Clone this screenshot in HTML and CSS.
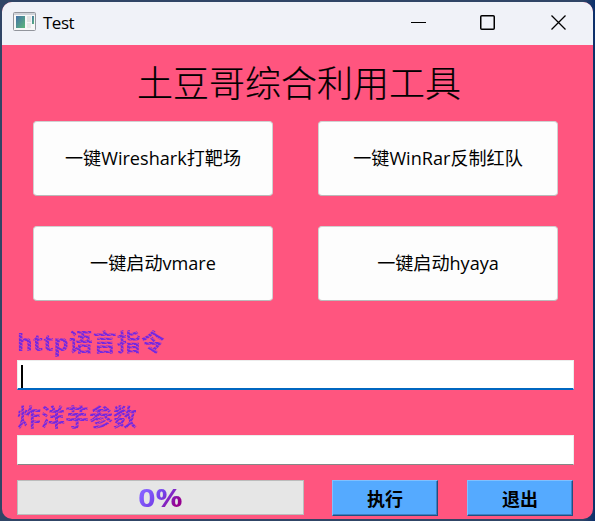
FILE: index.html
```html
<!DOCTYPE html>
<html lang="zh">
<head>
<meta charset="utf-8">
<title>Test</title>
<link rel="stylesheet" href="styles.css">
</head>
<body>
<div class="window">
  <header class="titlebar">
    <svg class="app-icon" width="24" height="20" viewBox="0 0 24 20">
      <defs><linearGradient id="g" x1="0" y1="0" x2="1" y2="1"><stop offset="0" stop-color="#4470a8"/><stop offset="1" stop-color="#5cb878"/></linearGradient></defs>
      <rect x=".5" y=".5" width="22" height="18" rx="1" fill="#f7f7f7" stroke="#92959c"/>
      <path d="M1 2h21" stroke="#c3c7cf" stroke-width="1.5"/>
      <rect x="3" y="4" width="9" height="12" fill="url(#g)"/>
      <rect x="14" y="4" width="4" height="6" fill="#e2e2e2"/><rect x="14" y="11" width="4" height="5" fill="#e8e8e8"/>
      <rect x="19" y="4" width="2" height="8" fill="url(#g)"/>
    </svg>
    <span class="caption">Test</span>
    <div class="controls">
      <svg width="15" height="15" viewBox="0 0 15 15"><path d="M0 7.5h15"/></svg>
      <svg class="maximize" width="15" height="15" viewBox="0 0 15 15"><rect x=".75" y=".75" width="13.5" height="13.5" rx="1"/></svg>
      <svg class="close" width="15" height="15" viewBox="0 0 15 15"><path d="M.5.5l14 14M14.500.5l-14 14"/></svg>
    </div>
  </header>
  <main class="content">
    <h1 class="heading">土豆哥综合利用工具</h1>
    <div class="tools">
      <button class="tool">一键Wireshark打靶场</button>
      <button class="tool">一键WinRar反制红队</button>
      <button class="tool">一键启动vmare</button>
      <button class="tool">一键启动hyaya</button>
    </div>
    <div class="field"><span class="label label-http">http语言指令</span><div class="input focused"><i class="caret"></i></div></div>
    <div class="field"><span class="label label-param">炸洋芋参数</span><div class="input"></div></div>
    <div class="actions">
      <div class="progress"><span class="percent">0%</span></div>
      <button class="action">执行</button>
      <button class="action">退出</button>
    </div>
  </main>
</div>
</body>
</html>
```
FILE: styles.css
```css
* { box-sizing: border-box; }
body {
  margin: 0; height: 521px; padding: 2px; overflow: hidden;
  background: linear-gradient(90deg, #304566 0, #304566 582px, #0b2f6b 595px);
  font-family: "Open Sans", "Noto Sans CJK SC", sans-serif;
  color: #000;
}
.window { width: 591px; height: 517px; border-radius: 10px; overflow: hidden; background: #ff557f; }
.titlebar { height: 43px; display: flex; align-items: center; padding: 0 27px 0 11px; background: #f0f2f8; }
.app-icon { margin-top: -3px; }
.caption { margin-left: 6px; font-size: 17px; letter-spacing: -.5px; line-height: 20px; margin-top: -2px; }
.controls { display: flex; gap: 54px; margin-left: auto; margin-top: -2px; }
.controls svg { fill: none; stroke: #000; stroke-width: 1; }
.controls .maximize { stroke-width: 1.5; }
.controls .close { stroke-width: 1.3; margin-left: 2px; }
.content { padding: 17px 19px 0 15px; }
.heading { margin: 0; height: 44px; line-height: 44px; text-align: center; font-size: 36px; font-weight: 300; padding-left: 7px; -webkit-text-stroke: .2px #000; }
.tools { display: grid; grid-template-columns: 240px 240px; gap: 30px 45px; margin: 15px 0 0 16px; }
.tool {
  height: 75px; padding: 0 0 4px; border: 1px solid #d0d0d0; border-bottom-color: #b9b9b9; border-radius: 4px;
  background: #fdfdfd; font: inherit; font-size: 18.1px; color: #000;
}
.field { height: 75px; display: flex; flex-direction: column; }
.tools + .field { margin-top: 24px; }
.label {
  width: max-content; height: 35px; line-height: 33px; font-size: 24px; font-weight: 700;
  color: transparent; background-clip: text; -webkit-background-clip: text;
}
.label-http { background-image: repeating-linear-gradient(30deg, #7528e0 0 1.5px, #c944a8 2.5px 3px); }
.label-param { background-image: repeating-linear-gradient(-30deg, #7528e0 0 1.5px, #c944a8 2.5px 3px); }
.input { height: 30px; background: #fff; border: 1px solid #ececec; border-bottom: 1px solid #868686; }
.focused { border-bottom: 2px solid #0067c0; padding: 4px 0 0 3px; }
.caret { display: block; width: 2px; height: 23px; background: #000; }
.actions { display: flex; margin-top: 5px; }
.progress { width: 287px; height: 35px; border: 1px solid #bcbcbc; background: #e6e6e6; text-align: center; line-height: 33px; }
.percent {
  font-size: 25px; font-weight: 700; display: inline-block; color: transparent; transform: scaleX(1.2);
  background: linear-gradient(125deg, #8560ff 20%, #7440e8 50%, #960090 80%);
  background-clip: text; -webkit-background-clip: text;
}
.action {
  width: 106px; height: 36px; margin-left: 28px; padding: 0 0 1px; background: #55aaff;
  border: 1px solid; border-color: #80c0ff #234e80 #234e80 #80c0ff; box-shadow: inset -1px -1px #3c80c4;
  font: inherit; font-size: 18px; font-weight: 700; color: #000;
}
.action + .action { margin-left: 29px; }
```
